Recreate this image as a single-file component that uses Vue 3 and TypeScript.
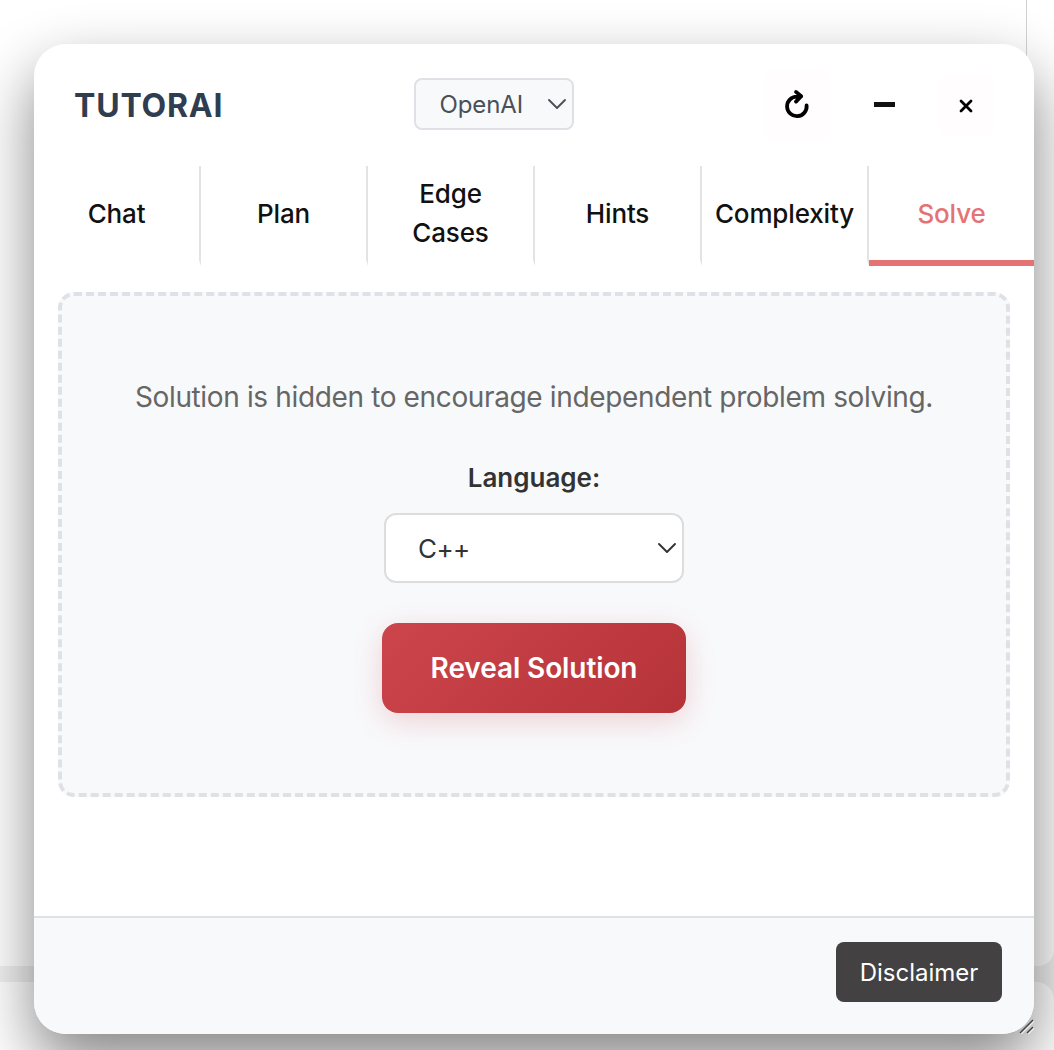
<script setup lang="ts">
import { ref } from 'vue'

interface Tab {
  id: string
  label: string
}

const tabs: Tab[] = [
  { id: 'chat', label: 'Chat' },
  { id: 'plan', label: 'Plan' },
  { id: 'edge', label: 'Edge Cases' },
  { id: 'hints', label: 'Hints' },
  { id: 'complexity', label: 'Complexity' },
  { id: 'solve', label: 'Solve' },
]
const active = ref<string>('solve')
</script>

<template>
  <div class="page">
    <div class="backdrop">
      <div class="pane upper"><div class="rule"></div></div>
      <div class="pane lower"></div>
    </div>

    <section class="window">
      <header class="header">
        <h1 class="title">TUTORAI</h1>
        <button class="provider">
          <span>OpenAI</span>
          <svg width="20" height="12" viewBox="0 0 20 12"><path d="M2 2l8 8 8-8" /></svg>
        </button>
        <div class="actions">
          <button class="action refresh" aria-label="Refresh">
            <svg width="28" height="32" viewBox="0 0 28 32">
              <path d="M23.6 16.4A9.8 9.8 0 1 1 13.8 7.6L18.2 7.4M13 2.9L18.2 7.2L13 12.6" />
            </svg>
          </button>
          <button class="action minimize" aria-label="Minimize"><i></i></button>
          <button class="action close" aria-label="Close">
            <svg width="14" height="14" viewBox="0 0 14 14"><path d="M2 2l10 10M12 2L2 12" /></svg>
          </button>
        </div>
      </header>

      <nav class="tabs">
        <button
          v-for="tab in tabs"
          :key="tab.id"
          class="tab"
          :class="[tab.id, { active: tab.id === active }]"
          @click="active = tab.id"
        >
          <span>{{ tab.label }}</span>
        </button>
      </nav>

      <main class="content">
        <div class="hidden-box">
          <p class="message">Solution is hidden to encourage independent problem solving.</p>
          <div class="label">Language:</div>
          <button class="language">
            <span>C++</span>
            <svg width="20" height="12" viewBox="0 0 20 12"><path d="M2 2l8 8 8-8" /></svg>
          </button>
          <button class="reveal"><span>Reveal Solution</span></button>
        </div>
      </main>

      <footer class="footer">
        <button class="disclaimer"><span>Disclaimer</span></button>
      </footer>
      <svg class="grip" width="16" height="16" viewBox="0 0 16 16">
        <path class="light" d="M3 16L16 3M10 16L16 10" />
        <path d="M2 15L15 2M9 15L15 9" />
      </svg>
    </section>
  </div>
</template>

<style>
body {
  margin: 0;
  overflow: hidden;
}
</style>

<style scoped>
* {
  box-sizing: border-box;
}
.page {
  position: relative;
  width: 1054px;
  height: 1050px;
  overflow: hidden;
  background: #f0f0f0;
  font-family: Inter, 'Liberation Sans', sans-serif;
}
button {
  font: inherit;
  border: 0;
  padding: 0;
  background: none;
  color: inherit;
}
span {
  white-space: nowrap;
}
svg {
  display: block;
  fill: none;
  stroke: currentColor;
  stroke-linecap: round;
  stroke-linejoin: round;
}
.backdrop {
  display: flex;
  flex-direction: column;
  gap: 16px;
  height: 100%;
}
.pane {
  background: #fff;
}
.upper {
  height: 966px;
  border-bottom-right-radius: 16px;
}
.rule {
  width: 1027px;
  height: 100px;
  border-right: 1px solid #d2d2d2;
}
.lower {
  flex: 1;
  border-top-right-radius: 18px;
}
.window {
  position: absolute;
  left: 34px;
  top: 44px;
  width: 1000px;
  height: 990px;
  display: flex;
  flex-direction: column;
  border-radius: 32px;
  background: #fff;
  box-shadow: 0 28px 62px rgba(0, 0, 0, 0.48);
}
.header {
  display: flex;
  align-items: center;
  justify-content: space-between;
  height: 122px;
  padding: 0 40px;
}
.title {
  width: 340px;
  margin: 1px 0 0;
  font-size: 32px;
  font-weight: 700;
  line-height: 40px;
  letter-spacing: 0.8px;
  color: #2f3d50;
}
.provider {
  display: flex;
  align-items: center;
  justify-content: space-between;
  width: 160px;
  height: 52px;
  margin-bottom: 2px;
  padding: 0 5px 0 23.5px;
  border: 2px solid #dee2e6;
  border-radius: 8px;
  background: #f8f9fb;
  color: #495057;
  font-size: 24px;
  letter-spacing: -0.1px;
}
.provider svg,
.language svg {
  stroke-width: 1.9;
}
.actions {
  display: flex;
  flex: 1;
  align-items: center;
  margin-left: 190px;
}
.action {
  display: flex;
  align-items: center;
  justify-content: center;
  border-radius: 12px;
  color: #000;
}
.refresh {
  width: 66px;
  height: 72px;
  background: #fffdfe;
}
.refresh svg {
  stroke-width: 3.8;
}
.minimize {
  width: 108px;
  height: 62px;
}
.minimize i {
  width: 21px;
  height: 5px;
  margin-bottom: 1px;
  background: #111;
}
.close {
  width: 56px;
  height: 62px;
  background: #fffdfe;
}
.close svg {
  margin-top: 2px;
  stroke-width: 2.8;
}
.tabs {
  display: flex;
  height: 100px;
}
.tab {
  display: flex;
  flex: 1 1 0;
  min-width: 0;
  align-items: center;
  justify-content: center;
  padding-top: 1px;
  border-right: 2px solid #e3e3e3;
  border-bottom: 6px solid transparent;
  color: #111;
  font-size: 26px;
  font-weight: 500;
  line-height: 39px;
  letter-spacing: -0.15px;
}
.tab:last-child {
  border-right: 0;
}
.tab.edge {
  padding-top: 0;
}
.tab.edge span {
  width: 90px;
  white-space: normal;
}
.tab.active {
  border-bottom-color: #e57373;
  color: #e57373;
}
.content {
  flex: 1;
  padding: 26px 24px 0;
}
.hidden-box {
  display: flex;
  flex-direction: column;
  align-items: center;
  height: 505px;
  padding-top: 80px;
  border: 4px dashed #dee2e6;
  border-radius: 16px;
  background: #f8f9fb;
}
.message {
  margin: 0;
  color: #666;
  font-size: 28px;
  line-height: 42px;
  letter-spacing: -0.36px;
  white-space: nowrap;
}
.label {
  margin-top: 40px;
  color: #333;
  font-size: 26px;
  font-weight: 600;
  line-height: 39px;
}
.language {
  display: flex;
  align-items: center;
  justify-content: space-between;
  width: 300px;
  height: 70px;
  margin-top: 16px;
  padding: 0 5px 0 32px;
  border: 2px solid #ddd;
  border-radius: 12px;
  background: #fff;
  color: #333;
  font-size: 26px;
  letter-spacing: -0.6px;
}
.reveal {
  width: 304px;
  height: 90px;
  margin-top: 40px;
  border-radius: 16px;
  background: linear-gradient(135deg, #cd454c, #b53338);
  box-shadow: 0 8px 30px rgba(200, 53, 60, 0.2);
  color: #fff;
  font-size: 28px;
  font-weight: 600;
  letter-spacing: -0.1px;
}
.footer {
  display: flex;
  justify-content: flex-end;
  height: 118px;
  padding: 24px 32px 0;
  border-top: 2px solid #dee2e6;
  border-radius: 0 0 32px 32px;
  background: #f8f9fb;
}
.disclaimer {
  width: 166px;
  height: 60px;
  border-radius: 8px;
  background: #444142;
  color: #fff;
  font-size: 24px;
}
.grip {
  position: absolute;
  right: 0;
  bottom: 0;
  stroke: #444;
  stroke-width: 1.5;
  stroke-linecap: butt;
}
.grip .light {
  stroke: #eee;
}
</style>
